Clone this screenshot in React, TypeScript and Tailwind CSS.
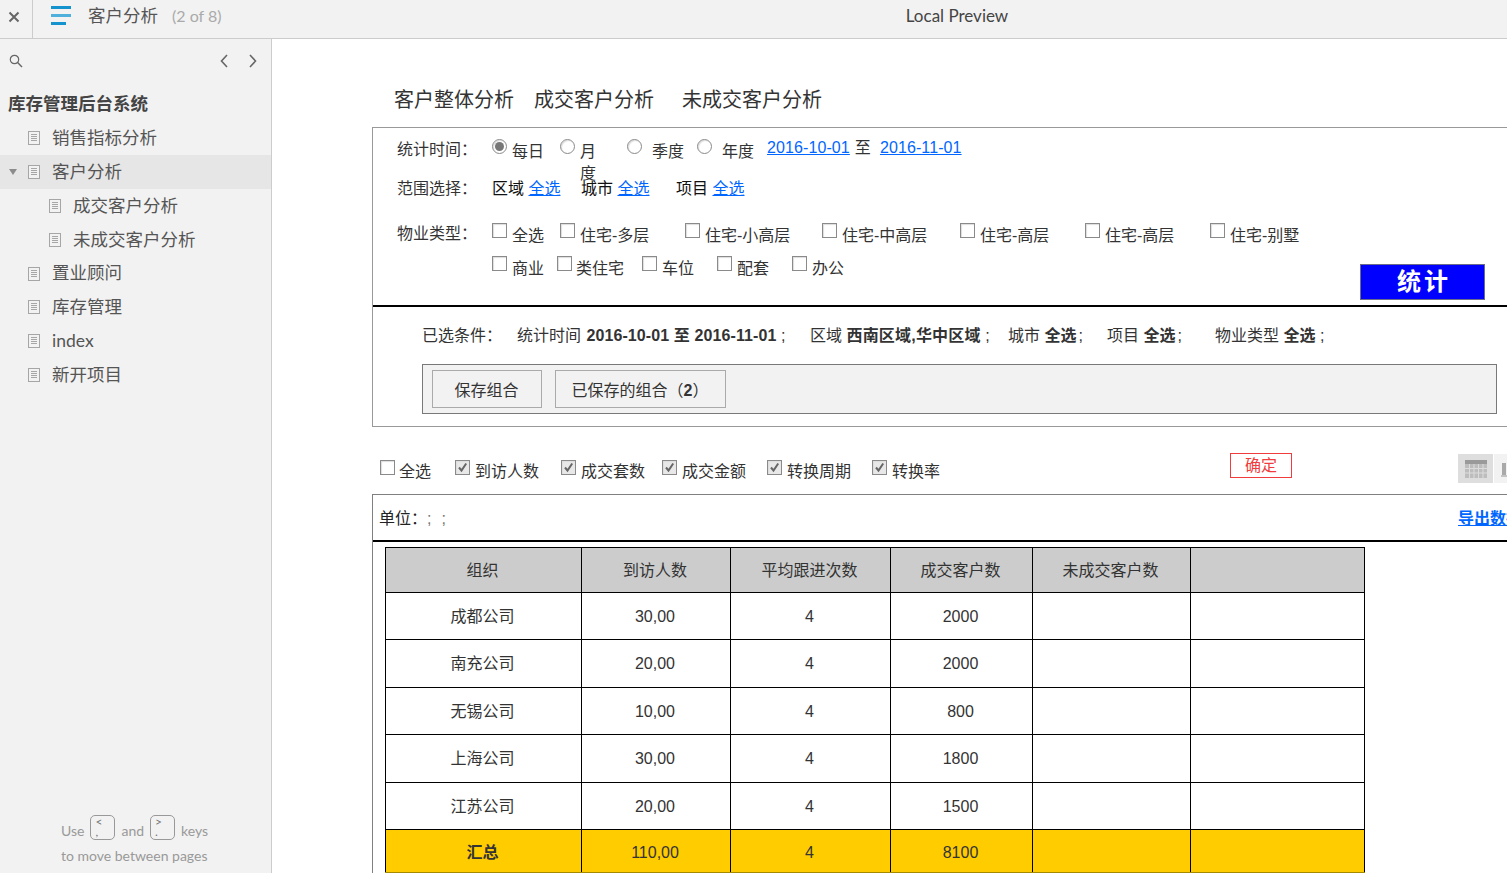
import React from 'react'

const cjk = { fontFamily: '"Liberation Sans", "Noto Sans CJK SC", sans-serif' }
const sideFont = { fontFamily: 'Lato, "Noto Sans CJK SC", sans-serif' }

function DocIcon() {
  return (
    <svg width="12" height="14" viewBox="0 0 12 14" className="shrink-0">
      <rect x="0.5" y="0.5" width="11" height="13" fill="#f2f2f2" stroke="#a6a6a6" />
      <path d="M3 3.5h6M3 5.5h6M3 7.5h6M3 9.5h6" stroke="#a6a6a6" strokeWidth="1" />
    </svg>
  )
}

function NavItem({ label, indent = 0, active = false }: { label: string; indent?: number; active?: boolean }) {
  return (
    <div className={`relative flex h-[33.8px] items-center ${active ? 'bg-[#e6e6e6]' : ''}`}>
      {active && <span className="absolute left-[9px] top-[14px] h-0 w-0 border-x-[4px] border-t-[6px] border-x-transparent border-t-[#8c8c8c]" />}
      <div className={`flex items-center gap-[12px] ${indent ? 'pl-[49px]' : 'pl-[28px]'}`}>
        <DocIcon />
        <span className="text-[17.5px] text-[#555]">{label}</span>
      </div>
    </div>
  )
}

function Key({ top, bottom }: { top: string; bottom: string }) {
  return (
    <span className="mx-[6px] -mt-[3px] inline-flex h-[25px] w-[25px] flex-col rounded-[5px] border border-[#999] pl-[4px] text-[12px] leading-[10px] text-[#777]">
      <span className="mt-[1px]">{top}</span>
      <span>{bottom}</span>
    </span>
  )
}

function Radio({ checked = false }: { checked?: boolean }) {
  return (
    <span className="flex h-[15px] w-[15px] shrink-0 items-center justify-center rounded-full border border-[#8a8a8a] bg-white shadow-[inset_1px_1px_1px_#ddd]">
      {checked && <span className="h-[9px] w-[9px] rounded-full bg-[#777]" />}
    </span>
  )
}

function Check({ checked = false }: { checked?: boolean }) {
  return (
    <span className={`flex h-[15px] w-[15px] shrink-0 items-center justify-center border border-[#8a8a8a] shadow-[inset_1px_1px_1px_#ddd] ${checked ? 'bg-[#e8e8e8]' : 'bg-white'}`}>
      {checked && (
        <svg width="11" height="11" viewBox="0 0 11 11">
          <path d="M2 5.5l2.5 3L9.2 1.5" fill="none" stroke="#666" strokeWidth="2" />
        </svg>
      )}
    </span>
  )
}

function CheckItem({ label, w, gap = 5, checked = false, top = 'mt-[2px]' }: { label: string; w: number; gap?: number; checked?: boolean; top?: string }) {
  return (
    <div className="flex shrink-0 items-start" style={{ width: w }}>
      <Check checked={checked} />
      <span className={`${top} whitespace-nowrap leading-[22px]`} style={{ marginLeft: gap }}>{label}</span>
    </div>
  )
}

function A({ children }: { children: React.ReactNode }) {
  return <a className="text-[#0066ff] underline">{children}</a>
}

const columns = [196, 149, 160, 142, 158, 174]
const heads = ['组织', '到访人数', '平均跟进次数', '成交客户数', '未成交客户数', '']
const rows = [
  { cells: ['成都公司', '30,00', '4', '2000'], h: 'h-[47px]' },
  { cells: ['南充公司', '20,00', '4', '2000'], h: 'h-[48px]' },
  { cells: ['无锡公司', '10,00', '4', '800'], h: 'h-[47px]' },
  { cells: ['上海公司', '30,00', '4', '1800'], h: 'h-[48px]' },
  { cells: ['江苏公司', '20,00', '4', '1500'], h: 'h-[47px]' },
]

export default function App() {
  return (
    <div className="flex h-[873px] w-[1507px] flex-col overflow-hidden bg-white text-[16px] text-[#333]" style={cjk}>
      {/* top bar */}
      <div className="flex h-[39px] shrink-0 border-b border-[#ccc] bg-[#f2f2f2]" style={sideFont}>
        <div className="flex w-[407px] items-center">
          <div className="flex h-full w-[33px] items-center justify-center border-r border-[#ccc] pr-[4px] pb-[5px]">
            <svg width="12" height="12" viewBox="0 0 12 12">
              <path d="M1.5 1.5l9 9M10.5 1.5l-9 9" stroke="#666" strokeWidth="2" />
            </svg>
          </div>
          <svg width="20" height="19" viewBox="0 0 20 19" className="mb-[8px] ml-[18px]">
            <path d="M0 1.5h20" stroke="#1593cf" strokeWidth="3" />
            <path d="M0 9.5h20" stroke="#4fb0dc" strokeWidth="3" />
            <path d="M0 17.5h15" stroke="#1593cf" strokeWidth="3" />
          </svg>
          <span className="mb-[6px] ml-[17px] text-[17.5px] text-[#555]">客户分析</span>
          <span className="mb-[6px] ml-[14px] text-[16px] text-[#aaa]">(2 of 8)</span>
        </div>
        <div className="flex flex-1 items-center justify-center pb-[6px] text-[17px] text-[#444]">Local Preview</div>
      </div>

      <div className="flex min-h-0 flex-1">
        {/* sidebar */}
        <div className="flex w-[272px] shrink-0 flex-col border-r border-[#ccc] bg-[#f2f2f2]" style={sideFont}>
          <div className="flex h-[44px] items-center pl-[9px] pr-[14px]">
            <svg width="14" height="14" viewBox="0 0 14 14">
              <circle cx="5.5" cy="5.5" r="4.2" fill="none" stroke="#666" strokeWidth="1.2" />
              <path d="M8.6 8.6l4.4 4.4" stroke="#666" strokeWidth="1.4" />
            </svg>
            <svg width="8" height="14" viewBox="0 0 8 14" className="ml-auto">
              <path d="M7 1L1.5 7 7 13" fill="none" stroke="#666" strokeWidth="1.6" />
            </svg>
            <svg width="8" height="14" viewBox="0 0 8 14" className="ml-[21px]">
              <path d="M1 1l5.5 6L1 13" fill="none" stroke="#666" strokeWidth="1.6" />
            </svg>
          </div>
          <div className="mt-[9px] h-[24px] pl-[8px] text-[17.5px] font-bold leading-[24px] text-[#444]">库存管理后台系统</div>
          <div className="mt-[5.5px]">
            <NavItem label="销售指标分析" />
            <NavItem label="客户分析" active />
            <NavItem label="成交客户分析" indent={1} />
            <NavItem label="未成交客户分析" indent={1} />
            <NavItem label="置业顾问" />
            <NavItem label="库存管理" />
            <NavItem label="index" />
            <NavItem label="新开项目" />
          </div>
          <div className="mt-auto pb-[7px] pl-[61px] text-[14px] text-[#999]">
            <div className="flex h-[25px] items-center">
              <span className="mt-[3px]">Use</span>
              <Key top="<" bottom="," />
              <span className="mt-[3px]">and</span>
              <Key top=">" bottom="." />
              <span className="mt-[3px]">keys</span>
            </div>
            <div className="mt-[5px] leading-[20px]">to move between pages</div>
          </div>
        </div>

        {/* main */}
        <div className="min-w-0 flex-1 overflow-hidden">
          <div className="ml-[122px] flex h-[88px] items-end pb-[13px] text-[20px] leading-[28px]">
            <span>客户整体分析</span>
            <span className="ml-[20px]">成交客户分析</span>
            <span className="ml-[28px]">未成交客户分析</span>
          </div>

          <div className="ml-[100px] w-[1300px] border-y border-l border-[#999]">
            {/* filters */}
            <div className="h-[179px] border-b-2 border-black pl-[24px]">
              <div className="flex h-[50px] pt-[11px]">
                <span className="w-[95px] shrink-0 leading-[22px]">统计时间：</span>
                <div className="flex w-[68px] shrink-0 items-start">
                  <Radio checked />
                  <span className="ml-[5px] mt-[2px] leading-[22px]">每日</span>
                </div>
                <div className="flex w-[67px] shrink-0 items-start">
                  <Radio />
                  <span className="ml-[5px] mt-[2px] w-[16px] leading-[22px]">月度</span>
                </div>
                <div className="flex w-[70px] shrink-0 items-start">
                  <Radio />
                  <span className="ml-[10px] mt-[2px] leading-[22px]">季度</span>
                </div>
                <div className="flex w-[70px] shrink-0 items-start">
                  <Radio />
                  <span className="ml-[10px] mt-[2px] leading-[22px]">年度</span>
                </div>
                <div className="-mt-[2px] whitespace-nowrap leading-[22px] tracking-[0.1px]">
                  <A>2016-10-01</A>
                  <span className="ml-[5px]">至</span>
                  <span className="ml-[9px]"><A>2016-11-01</A></span>
                </div>
              </div>
              <div className="flex h-[39px] items-start">
                <span className="w-[95px] shrink-0 leading-[22px]">范围选择：</span>
                <div className="flex leading-[22px] text-[#111]">
                  <span className="w-[89px]">区域 <A>全选</A></span>
                  <span className="w-[95px]">城市 <A>全选</A></span>
                  <span>项目 <A>全选</A></span>
                </div>
              </div>
              <div className="flex h-[31px] pt-[6px]">
                <span className="mt-[2px] w-[95px] shrink-0 leading-[18px]">物业类型：</span>
                <CheckItem label="全选" w={68} />
                <CheckItem label="住宅-多层" w={125} />
                <CheckItem label="住宅-小高层" w={137} />
                <CheckItem label="住宅-中高层" w={138} />
                <CheckItem label="住宅-高层" w={125} />
                <CheckItem label="住宅-高层" w={125} />
                <CheckItem label="住宅-别墅" w={110} />
              </div>
              <div className="flex pl-[95px] pt-[8px]">
                <CheckItem label="商业" w={65} />
                <CheckItem label="类住宅" w={85} gap={4} />
                <CheckItem label="车位" w={75} />
                <CheckItem label="配套" w={75} />
                <CheckItem label="办公" w={68} />
                <button className="ml-[500px] mt-[8px] flex h-[36px] w-[125px] shrink-0 items-center justify-center gap-[3px] border border-[#6b6b8c] bg-[#0000ff] text-[24px] font-bold leading-none text-white">
                  <span>统</span>
                  <span>计</span>
                </button>
              </div>
            </div>

            {/* selected conditions */}
            <div className="h-[119px] pl-[49px]">
              <div className="flex h-[57px] items-start whitespace-nowrap pt-[18px] leading-[22px]">
                <span className="w-[95px] shrink-0">已选条件：</span>
                <span className="w-[293px] shrink-0">统计时间 <b className="ml-[1px] tracking-[0.1px]">2016-10-01 至 2016-11-01</b> ;</span>
                <span className="w-[198px] shrink-0">区域 <b className="tracking-[0.2px]">西南区域,华中区域</b> ;</span>
                <span className="w-[99px] shrink-0">城市 <b>全选</b><span className="ml-[2px]">;</span></span>
                <span className="w-[108px] shrink-0">项目 <b>全选</b><span className="ml-[2px]">;</span></span>
                <span className="shrink-0">物业类型 <b>全选</b> ;</span>
              </div>
              <div className="flex h-[50px] w-[1075px] items-start gap-[13px] border border-[#797979] bg-[#f2f2f2] pl-[9px] pt-[5px]">
                <button className="h-[38px] w-[110px] border border-[#aaa] bg-[#f2f2f2] pt-[3px] pr-[1px]">保存组合</button>
                <button className="h-[38px] w-[171px] border border-[#aaa] bg-[#f2f2f2] pt-[3px] pr-[1px]">已保存的组合（<b>2</b>）</button>
              </div>
            </div>
          </div>

          {/* column toggles */}
          <div className="ml-[100px] flex h-[67px] w-[1300px] items-start">
            <div className="flex w-[600px] shrink-0 pl-[8px] pt-[33px]">
              <CheckItem label="全选" w={75} gap={4} top="mt-[1px]" />
              <CheckItem label="到访人数" w={106} checked top="mt-[1px]" />
              <CheckItem label="成交套数" w={101} checked top="mt-[1px]" />
              <CheckItem label="成交金额" w={105} checked top="mt-[1px]" />
              <CheckItem label="转换周期" w={105} checked top="mt-[1px]" />
              <CheckItem label="转换率" w={100} checked top="mt-[1px]" />
            </div>
            <button className="ml-[258px] mt-[26px] h-[25px] w-[62px] shrink-0 border border-[#f03c3c] pt-[1px] text-[16px] leading-none text-[#f03c3c]">确定</button>
            <div className="ml-[166px] mt-[27px] flex h-[29px] shrink-0">
              <div className="flex w-[35px] items-center justify-center bg-[#dedede]">
                <svg width="22" height="18" viewBox="0 0 22 18">
                  <rect x="0" y="0" width="22" height="18" fill="#bdbdbd" />
                  <rect x="0" y="0" width="22" height="4" fill="#9a9a9a" />
                  <path d="M4.5 4v14M9 4v14M13.5 4v14M18 4v14M0 8.5h22M0 13h22" stroke="#dcdcdc" strokeWidth="1" />
                </svg>
              </div>
              <div className="ml-[1px] flex w-[40px] items-end bg-[#f2f2f2] pb-[6px] pl-[7px]">
                <svg width="8" height="14" viewBox="0 0 8 14">
                  <rect x="1" y="0" width="4" height="12" fill="#a9a9a9" />
                  <rect x="0" y="12" width="8" height="2" fill="#c4c4c4" />
                </svg>
              </div>
            </div>
          </div>

          {/* result table */}
          <div className="ml-[100px] w-[1300px] border-l border-t border-[#808080]">
            <div className="flex h-[47px] items-start border-b-2 border-black pl-[6px] pt-[13px] leading-[22px]">
              <span className="w-[1079px] shrink-0 text-[#222]">单位：<span className="text-[#777]">;</span><span className="ml-[10px] text-[#777]">;</span></span>
              <a className="whitespace-nowrap font-bold text-[#0066ff] underline">导出数据</a>
            </div>
            <table className="ml-[12px] mt-[5px] table-fixed border-collapse" style={{ width: 979 }}>
              <colgroup>
                {columns.map((w, i) => <col key={i} style={{ width: w }} />)}
              </colgroup>
              <thead>
                <tr className="h-[45px] bg-[#cccccc]">
                  {heads.map((h, i) => (
                    <th key={i} className="border border-black pr-[2px] pt-[2px] font-normal">{h}</th>
                  ))}
                </tr>
              </thead>
              <tbody>
                {rows.map((r) => (
                  <tr key={r.cells[0]} className={r.h}>
                    {r.cells.map((c, i) => <td key={i} className="border border-black pr-[2px] pt-[1px] text-center">{c}</td>)}
                    <td className="border border-black" />
                    <td className="border border-black" />
                  </tr>
                ))}
                <tr className="h-[43px] bg-[#ffcc00]">
                  <td className="border border-black border-b-[#a58a00] pr-[2px] pt-[3px] text-center font-bold">汇总</td>
                  <td className="border border-black border-b-[#a58a00] pr-[2px] pt-[3px] text-center">110,00</td>
                  <td className="border border-black border-b-[#a58a00] pr-[2px] pt-[3px] text-center">4</td>
                  <td className="border border-black border-b-[#a58a00] pr-[2px] pt-[3px] text-center">8100</td>
                  <td className="border border-black border-b-[#a58a00]" />
                  <td className="border border-black border-b-[#a58a00]" />
                </tr>
              </tbody>
            </table>
          </div>
        </div>
      </div>
    </div>
  )
}
